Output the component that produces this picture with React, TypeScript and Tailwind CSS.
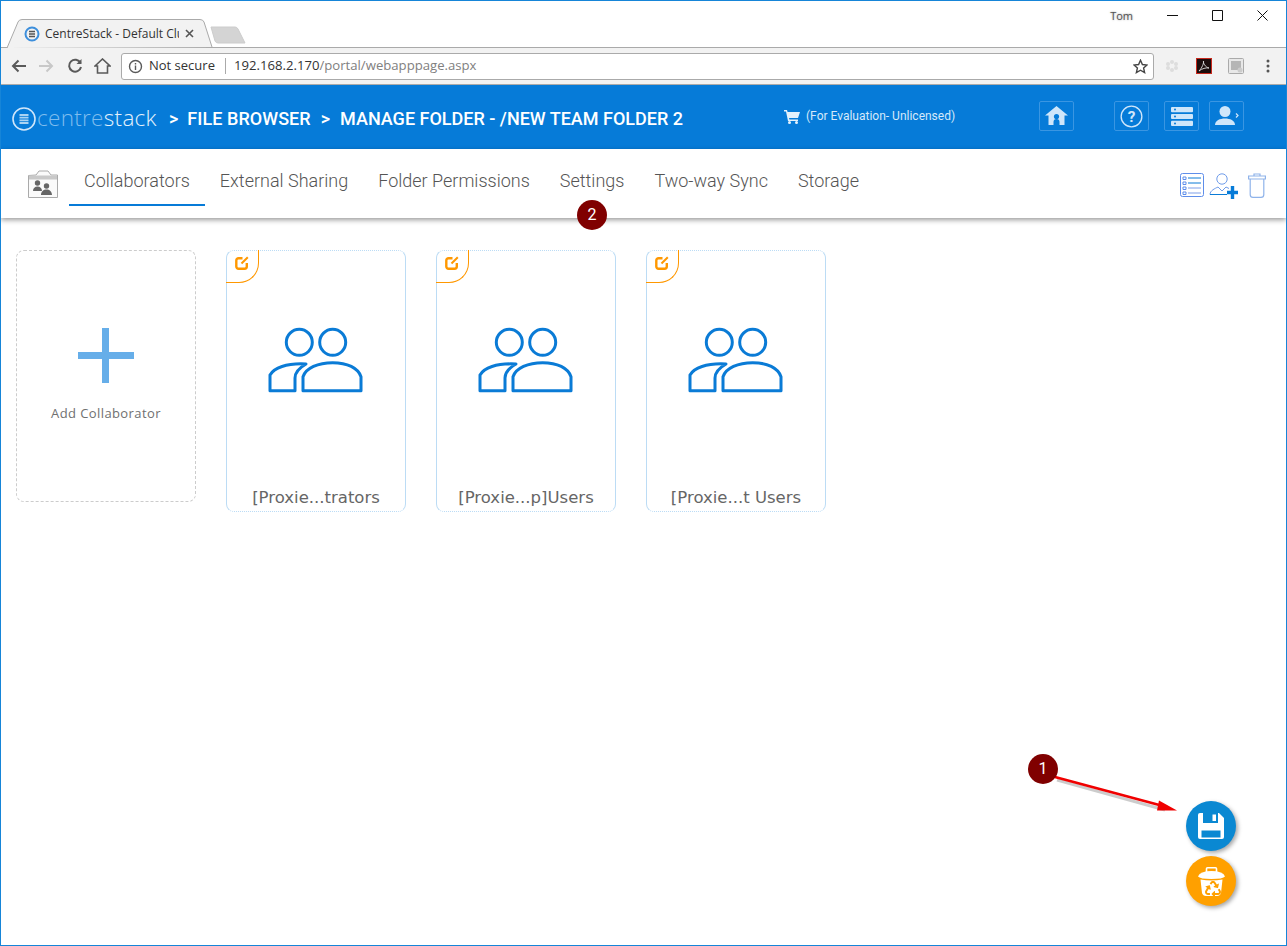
import { useState } from 'react'
import { FaRecycle } from 'react-icons/fa'

const tabs = ['Collaborators', 'External Sharing', 'Folder Permissions', 'Settings', 'Two-way Sync', 'Storage']
const collaborators = ['[Proxie...trators', '[Proxie...p]Users', '[Proxie...t Users']

function GroupIcon() {
    return (
        <svg width="96" height="66" viewBox="0 0 96 66" fill="none" stroke="#0a7bd6" strokeWidth="3" strokeLinejoin="round">
            <circle cx="31.3" cy="15.3" r="13" />
            <circle cx="64.7" cy="15.3" r="13" />
            <path d="M35 63.7V49.7C38 41 50 35.7 64.7 35.7S90 41 93 49.7V63.7Z" />
            <path d="M2 63.7V48C6 41 18 36 38 37C31 41 27 45 27 51V63.7Z" />
        </svg>
    )
}

function EditIcon() {
    return (
        <svg width="14" height="14" viewBox="0 0 14 14" fill="none" stroke="#ff9800" strokeWidth="2.4">
            <path d="M7.5 2.2H3.5A2.2 2.2 0 0 0 1.3 4.4V10.5A2.2 2.2 0 0 0 3.5 12.7H9.6A2.2 2.2 0 0 0 11.8 10.5V7" />
            <path d="M6.5 7.5L12.8 1.2" strokeWidth="2" />
        </svg>
    )
}

function CollaboratorCard({ name }: { name: string }) {
    return (
        <div className="relative flex h-[262px] w-[180px] flex-col items-center rounded-lg border border-[#bcdcf5] [border-style:dotted_solid]">
            <div className="absolute -left-px -top-px flex h-[33px] w-[33px] rounded-br-[20px] border-b border-r border-[#ff9800] pl-[9px] pt-[6px]">
                <EditIcon />
            </div>
            <div className="mt-[76px]">
                <GroupIcon />
            </div>
            <div className="mt-auto pb-[3px] font-['DejaVu_Sans',sans-serif] text-[16.5px] leading-[20px] text-[#666]">{name}</div>
        </div>
    )
}

export default function App() {
    const [activeTab] = useState('Collaborators')

    return (
        <div className="relative flex h-[946px] w-[1287px] flex-col overflow-hidden border border-[#1685d8] bg-white font-['Roboto',sans-serif]">
            {/* Окно браузера: вкладки */}
            <div className="flex h-[46px] items-start">
                <div className="mt-[18px] flex items-start pl-[5px]">
                    <div className="relative z-10 flex h-[29px] w-[207px] items-center">
                        <svg className="absolute inset-0" width="207" height="29" viewBox="0 0 207 29">
                            <path d="M1 29L12 3Q13 .5 16 .5H194Q197 .5 198 3L206 28" fill="#f2f2f2" stroke="#aaa" />
                        </svg>
                        <div className="relative ml-[18px] flex items-center">
                            <svg width="16" height="16" viewBox="0 0 16 16" fill="none">
                                <circle cx="8" cy="8" r="6.5" stroke="#3d8fdc" strokeWidth="2" />
                                <path d="M5 5.5H11M5 8H11M5 10.5H11" stroke="#555" strokeWidth="1.4" />
                            </svg>
                            <span className="ml-[5px] w-[134px] overflow-hidden whitespace-nowrap font-['Open_Sans',sans-serif] text-[12px] text-[#333]">CentreStack - Default Clu</span>
                            <svg className="ml-[6px]" width="9" height="9" viewBox="0 0 9 9" stroke="#555" strokeWidth="1.6">
                                <path d="M1 1L8 8M8 1L1 8" />
                            </svg>
                        </div>
                    </div>
                    <svg className="-ml-[3px] mt-[7px]" width="36" height="18" viewBox="0 0 36 18">
                        <path d="M1 1H25Q27 1 28 3L35 17H8Q6 17 5 15Z" fill="#d4d4d4" stroke="#ccc" />
                    </svg>
                </div>
                <span className="ml-auto mt-[7px] font-['Open_Sans',sans-serif] text-[11px] text-[#555] [text-shadow:0_0_2px_#999]">Tom</span>
                <svg className="ml-[34px] mt-[9px]" width="11" height="11" viewBox="0 0 11 11" stroke="#111"><path d="M0 5.5H11" /></svg>
                <svg className="ml-[34px] mt-[9px]" width="11" height="11" viewBox="0 0 11 11" fill="none" stroke="#111"><path d="M.5 .5H10.5V10.5H.5Z" /></svg>
                <svg className="ml-[34px] mr-[18px] mt-[9px]" width="11" height="11" viewBox="0 0 11 11" stroke="#111"><path d="M.5 .5L10.5 10.5M10.5 .5L.5 10.5" /></svg>
            </div>

            {/* Панель адреса */}
            <div className="flex h-[38px] items-center border-y border-[#aaa] bg-[#f2f2f2]">
                <div className="flex w-[120px] shrink-0 items-center pl-[10px]">
                    <svg width="16" height="14" viewBox="0 0 16 14" fill="none" stroke="#5a5a5a" strokeWidth="2"><path d="M15 7H2M7.5 1.5L2 7L7.5 12.5" /></svg>
                    <svg className="ml-[11px]" width="16" height="14" viewBox="0 0 16 14" fill="none" stroke="#c8c8c8" strokeWidth="2"><path d="M1 7H14M8.5 1.5L14 7L8.5 12.5" /></svg>
                    <svg className="ml-[13px]" width="16" height="16" viewBox="0 0 16 16" fill="none" stroke="#5a5a5a" strokeWidth="2"><path d="M13.5 5A6 6 0 1 0 14 9" /><path d="M14.5 1V6H9.5" fill="#5a5a5a" stroke="none" /></svg>
                    <svg className="ml-[11px]" width="17" height="16" viewBox="0 0 17 16" fill="none" stroke="#5a5a5a" strokeWidth="1.6"><path d="M1 8L8.5 1L16 8H13.5V15H3.5V8Z" /></svg>
                </div>
                <div className="flex h-[27px] w-[1033px] items-center rounded-[3px] border border-[#aaa] bg-white pl-[6px] pr-[5px]">
                    <svg width="15" height="15" viewBox="0 0 15 15" fill="none" stroke="#5a5a5a" strokeWidth="1.4"><circle cx="7.5" cy="7.5" r="6" /><path d="M7.5 6.5V11M7.5 4V5.5" /></svg>
                    <span className="ml-[6px] font-['Open_Sans',sans-serif] text-[13px] text-[#333]">Not secure</span>
                    <span className="ml-[10px] h-[16px] w-px bg-[#aaa]" />
                    <span className="ml-[8px] font-['Open_Sans',sans-serif] text-[13.15px] text-[#333]">
                        192.168.2.170<span className="text-[#808080]">/portal/webapppage.aspx</span>
                    </span>
                    <svg className="ml-auto" width="15" height="15" viewBox="0 0 15 15" fill="none" stroke="#444" strokeWidth="1.4"><path d="M7.5 1.2L9.4 5.5L14 6L10.6 9L11.6 13.6L7.5 11.2L3.4 13.6L4.4 9L1 6L5.6 5.5Z" /></svg>
                </div>
                <svg className="ml-[11px]" width="14" height="14" viewBox="0 0 14 14" fill="#ddd"><circle cx="7" cy="3" r="2" /><circle cx="7" cy="11" r="2" /><circle cx="3" cy="5" r="2" /><circle cx="11" cy="5" r="2" /><circle cx="3" cy="9" r="2" /><circle cx="11" cy="9" r="2" /></svg>
                <svg className="ml-[17px]" width="16" height="16" viewBox="0 0 16 16" fill="none"><rect x=".5" y=".5" width="15" height="15" fill="#1c0d0d" stroke="#c8281c" /><path d="M3 13C6 10 8 5 7.5 3C7 5 9 9 13 10C10 9.5 6 10.5 3 13Z" stroke="#ddd" strokeWidth=".9" /></svg>
                <svg className="ml-[16px]" width="16" height="16" viewBox="0 0 16 16" fill="none"><rect x=".5" y=".5" width="15" height="15" rx="1" fill="#e8e8e8" stroke="#aaa" /><rect x="3" y="3" width="10" height="9" fill="#b5b5b5" /><circle cx="12" cy="12" r="2.5" fill="#ccc" /></svg>
                <svg className="ml-[22px]" width="4" height="14" viewBox="0 0 4 14" fill="#555"><circle cx="2" cy="2" r="1.5" /><circle cx="2" cy="7" r="1.5" /><circle cx="2" cy="12" r="1.5" /></svg>
            </div>

            {/* Шапка приложения */}
            <div className="flex h-[64px] items-center bg-[#067bd8] pl-[11px] text-white">
                <svg className="mt-[4px]" width="24" height="24" viewBox="0 0 24 24" fill="none">
                    <circle cx="12" cy="12" r="11" stroke="#cfe6fa" strokeWidth="1.6" />
                    <path d="M7.5 8H16.5M7.5 10.7H16.5M7.5 13.4H16.5M7.5 16H16.5" stroke="#a9d3f3" strokeWidth="1.8" />
                </svg>
                <span className="ml-px mt-[2px] w-[121px] whitespace-nowrap font-['Open_Sans',sans-serif] text-[22.5px] font-light leading-none tracking-[0.3px] text-[#7fbdee]">
                    centre<span className="text-[#e3f1fc]">stack</span>
                </span>
                <span className="ml-[11px] mt-[2px] text-[18px] font-medium">&gt;</span>
                <span className="ml-[9px] mt-[2px] text-[18px] font-medium tracking-[0.05px]">FILE BROWSER</span>
                <span className="ml-[10px] mt-[2px] text-[18px] font-medium">&gt;</span>
                <span className="ml-[10px] mt-[2px] text-[18px] font-medium">MANAGE FOLDER - /NEW TEAM FOLDER 2</span>
                <svg className="-mt-[2px] ml-[101px]" width="16" height="15" viewBox="0 0 16 15" fill="#e3f1fc"><path d="M0 1H3L3.6 3H16L14 9H5L5.4 10.5H14V12H4L2 2.5H0Z" /><circle cx="5.5" cy="13.5" r="1.5" /><circle cx="12.5" cy="13.5" r="1.5" /></svg>
                <span className="-mt-[2px] ml-[6px] text-[12px] text-[#d5e9fa]">(For Evaluation- Unlicensed)</span>
                <div className="-mt-[2px] ml-[84px] flex h-[30px] w-[35px] items-center justify-center rounded-[2px] border border-[#3a96e2]">
                    <svg width="23" height="20" viewBox="0 0 23 20" fill="#cfe6fa"><path d="M11.5 0L23 9.5H19.5V19H14.5V16A3 3 0 0 0 8.5 16V19H3.5V9.5H0Z" /><circle cx="11.5" cy="10.5" r="2.6" fill="#067bd8" /></svg>
                </div>
                <div className="-mt-[2px] ml-[40px] flex h-[30px] w-[35px] items-center justify-center rounded-[2px] border border-[#3a96e2]">
                    <svg width="23" height="23" viewBox="0 0 24 24" fill="none"><circle cx="12" cy="12" r="10.8" stroke="#cfe6fa" strokeWidth="1.4" /><text x="12" y="17.5" textAnchor="middle" fontSize="16" fontWeight="700" fill="#cfe6fa" fontFamily="Roboto, sans-serif">?</text></svg>
                </div>
                <div className="-mt-[2px] ml-[15px] flex h-[30px] w-[35px] items-center justify-center rounded-[2px] border border-[#3a96e2]">
                    <svg width="22" height="19" viewBox="0 0 22 19" fill="#cfe6fa"><rect width="22" height="5.2" y="0" rx="1" /><rect width="22" height="5.2" y="6.9" rx="1" /><rect width="22" height="5.2" y="13.8" rx="1" /><circle cx="4" cy="2.6" r="1" fill="#067bd8" /><circle cx="4" cy="9.5" r="1" fill="#067bd8" /><circle cx="4" cy="16.4" r="1" fill="#067bd8" /></svg>
                </div>
                <div className="-mt-[2px] ml-[10px] flex h-[30px] w-[35px] items-center justify-center rounded-[2px] border border-[#3a96e2]">
                    <svg width="24" height="20" viewBox="0 0 24 20" fill="#cfe6fa"><circle cx="10" cy="5.5" r="5.5" /><path d="M0 19C0 14.5 5 12.5 10 12.5S20 14.5 20 19Z" /><path d="M21 7.5L23 9.5L21 11.5" fill="none" stroke="#cfe6fa" strokeWidth="1.2" /></svg>
                </div>
            </div>

            {/* Вкладки страницы */}
            <div className="relative z-10 flex h-[69px] items-start bg-white pl-[27px] shadow-[0_2px_5px_rgba(0,0,0,0.4)]">
                <svg className="mt-[21px]" width="30" height="28" viewBox="0 0 30 28" fill="none">
                    <path d="M.5 27.5V5.5L8 5L11 1H20L23 5H29.5V27.5Z" fill="#fafafa" stroke="#aaa" />
                    <path d="M1 5.5H29V9.5H1Z" fill="#c9c9c9" />
                    <circle cx="9.5" cy="13" r="2.7" fill="#666" /><circle cx="18.5" cy="16" r="2.7" fill="#666" />
                    <path d="M5 21C5 18 7 16.5 9.5 16.5S14 18 14 21ZM13 25C13 21.5 15.5 19.5 18.5 19.5S24 21.5 24 25Z" fill="#666" />
                </svg>
                <div className="ml-[11px] flex h-[57px]">
                    {tabs.map((tab) => (
                        <div key={tab} className={`flex h-full items-end px-[15px] pb-[13px] text-[18px] font-light leading-[21px] text-[#555] ${tab === activeTab ? 'border-b-2 border-[#067bd8]' : 'border-b-2 border-transparent'}`}>
                            {tab}
                        </div>
                    ))}
                </div>
                <div className="ml-auto mr-[20px] mt-[24px] flex items-start">
                    <svg width="24" height="24" viewBox="0 0 24 24" fill="none" stroke="#5f8eea"><rect x=".5" y=".5" width="23" height="23" rx="2" /><path d="M8 5H21M8 10H21" stroke="#0a7bd6" /><path d="M8 15H21M8 20H21" stroke="#7f9fe8" /><path d="M3 4H6V6.5H3ZM3 9H6V11.5H3ZM3 14H6V16.5H3ZM3 19H6V21.5H3Z" /></svg>
                    <svg className="ml-[5px]" width="29" height="26" viewBox="0 0 29 26" fill="none" stroke="#6f9cea"><circle cx="13" cy="6" r="5.2" /><path d="M1 21.5C1 17.5 6 15.5 9 14L13 18L17 14L20 15.5" /><path d="M1 21.5H18" stroke="#0a7bd6" /><path d="M23.5 13V26M18 19.5H29" stroke="#067bd8" strokeWidth="3.4" /></svg>
                    <svg className="ml-[10px]" width="18" height="25" viewBox="0 0 18 25" fill="none" stroke="#8fb3ea" strokeWidth="1.2"><path d="M.6 3H17.4V6H.6ZM6 3V1H12V3" /><path d="M2.2 6V21.5Q2.2 24.4 5 24.4H13Q15.8 24.4 15.8 21.5V6" /></svg>
                </div>
            </div>

            {/* Карточки */}
            <div className="flex flex-1 items-start gap-[30px] pl-[15px] pt-[32px]">
                <div className="flex h-[252px] w-[180px] flex-col items-center rounded-lg border border-dashed border-[#ccc]">
                    <div className="relative mt-[77px] h-[55px] w-[56px]">
                        <div className="absolute left-0 top-[24px] h-[7px] w-full bg-[#66aee9]" />
                        <div className="absolute left-[24px] top-0 h-full w-[7px] bg-[#66aee9]" />
                    </div>
                    <div className="mt-[21px] font-['Open_Sans',sans-serif] text-[13px] tracking-[0.4px] text-[#707070]">Add Collaborator</div>
                </div>
                {collaborators.map((name) => (
                    <CollaboratorCard key={name} name={name} />
                ))}
            </div>

            {/* Пометки поверх страницы */}
            <div className="absolute left-[576px] top-[199px] z-20 flex h-[30px] w-[30px] items-center justify-center rounded-full bg-[#800000] text-[16px] text-white">2</div>
            <svg className="absolute left-[1040px] top-[760px] z-20" width="150" height="60" viewBox="0 0 150 60">
                <path d="M16 19L124 49" stroke="#000" strokeOpacity="0.2" strokeWidth="3" />
                <path d="M14 16L122 45" stroke="#f00000" strokeWidth="2.8" />
                <path d="M136 49.5L118 39.5L116 49.5Z" fill="#f00000" />
            </svg>
            <div className="absolute left-[1027px] top-[753px] z-20 flex h-[30px] w-[30px] items-center justify-center rounded-full bg-[#800000] text-[16px] text-white">1</div>
            <div className="absolute left-[1185px] top-[800px] flex h-[50px] w-[50px] items-center justify-center rounded-full bg-[#0a88d2] shadow-[2px_2px_4px_rgba(0,0,0,0.35)]">
                <svg width="26" height="26" viewBox="0 0 26 26"><path d="M2 0H21L26 5V24Q26 26 24 26H2Q0 26 0 24V2Q0 0 2 0Z" fill="#fff" /><rect x="5" y="0" width="15" height="10" fill="#0a88d2" /><rect x="14.5" y="1.5" width="3.5" height="6.5" fill="#fff" /><rect x="3.5" y="17.5" width="19" height="7" fill="#0a88d2" /></svg>
            </div>
            <div className="absolute left-[1185px] top-[855px] flex h-[50px] w-[50px] items-center justify-center rounded-full bg-[#ffa000] shadow-[2px_2px_4px_rgba(0,0,0,0.35)]">
                <svg width="27" height="29" viewBox="0 0 27 29" fill="#fff">
                    <path d="M8.5 5V1.8Q8.5 .8 9.5 .8H17.5Q18.5 .8 18.5 1.8V5" fill="none" stroke="#fff" strokeWidth="1.6" />
                    <path d="M0 9.5Q2 4 13.5 4T27 9.5Q25 12 13.5 12T0 9.5Z" />
                    <path d="M2.5 12.5Q13.5 14.5 24.5 12.5L23 26Q22 29 19 29H8Q5 29 4 26Z" />
                    <FaRecycle x="7" y="14" width="13" height="12" color="#ffa000" />
                </svg>
            </div>
        </div>
    )
}
